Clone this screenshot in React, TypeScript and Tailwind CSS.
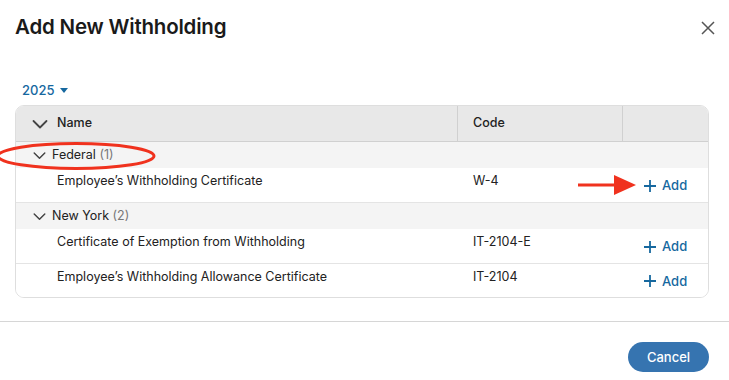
import React from 'react';

const font = { fontFamily: 'Inter, "Noto Sans", sans-serif' };

const Chevron = ({ size = 14, w = 1.6 }: { size?: number; w?: number }) => (
  <svg width={size} height={size} viewBox="0 0 16 16" fill="none" stroke="#444" strokeWidth={w} strokeLinecap="round" strokeLinejoin="round">
    <path d="M1.5 5 8 11.5 14.5 5" />
  </svg>
);

const AddButton = () => (
  <button className="flex items-center gap-[5px] text-[13px] font-medium text-[#16689f]">
    <svg width="14" height="14" viewBox="0 0 14 14" stroke="#16689f" strokeWidth="1.8">
      <path d="M7 1v12M1 7h12" />
    </svg>
    Add
  </button>
);

type Item = { name: string; code: string };

const groups: { title: string; items: Item[] }[] = [
  { title: 'Federal', items: [{ name: 'Employee’s Withholding Certificate', code: 'W-4' }] },
  {
    title: 'New York',
    items: [
      { name: 'Certificate of Exemption from Withholding', code: 'IT-2104-E' },
      { name: 'Employee’s Withholding Allowance Certificate', code: 'IT-2104' },
    ],
  },
];

const App: React.FC = () => {
  return (
    <div className="relative w-[729px] h-[380px] bg-white overflow-hidden text-[#222]" style={font}>
      {/* Header */}
      <div className="flex items-center justify-between pl-[15px] pr-[13px] pt-[12px]">
        <h2 className="text-[20.5px] font-semibold text-[#1a1a1a] tracking-[-0.2px]">Add New Withholding</h2>
        <svg width="16" height="16" viewBox="0 0 16 16" stroke="#555" strokeWidth="1.5" className="mt-[1px]">
          <path d="M2 2l12 12M14 2 2 14" />
        </svg>
      </div>

      {/* Year picker */}
      <div className="pl-[22px] mt-[38px] flex items-center gap-[6px] text-[13px] font-medium text-[#16689f]">
        2025
        <svg width="8" height="5" viewBox="0 0 8 5" fill="#16689f">
          <path d="M0 0h8L4 5z" />
        </svg>
      </div>

      {/* Table */}
      <div className="ml-[15px] mr-[20px] mt-[5px] rounded-[9px] border border-[#dedede] overflow-hidden text-[12.5px]">
        <div className="flex h-[36px] bg-[#e8e8e8] border-b border-[#d0d0d0] font-medium text-[#222]">
          <div className="w-[442px] flex items-center gap-[9px] pl-[16px] border-r border-[#d0d0d0]">
            <Chevron size={16} w={1.8} />
            Name
          </div>
          <div className="w-[165px] flex items-center pl-[15px] border-r border-[#d0d0d0]">Code</div>
          <div className="flex-1" />
        </div>

        {groups.map((g, gi) => (
          <div key={g.title}>
            <div className={`flex items-center gap-[6px] pl-[17px] bg-[#f4f4f4] ${gi === 0 ? 'h-[26px]' : 'h-[27px] border-t border-[#e4e4e4]'}`}>
              <Chevron size={13} w={1.8} />
              <span>
                {g.title} <span className="text-[#777]">({g.items.length})</span>
              </span>
            </div>
            {g.items.map((it, ii) => (
              <div key={it.name} className={`flex h-[34px] bg-white ${ii > 0 ? 'border-t border-[#e4e4e4]' : ''}`}>
                <div className="w-[442px] pl-[41px] pt-[4px]">{it.name}</div>
                <div className="w-[165px] pl-[15px] pt-[4px]">{it.code}</div>
                <div className="flex-1 flex items-center pl-[20px] pt-[1px]">
                  <AddButton />
                </div>
              </div>
            ))}
          </div>
        ))}
      </div>

      {/* Footer */}
      <div className="mt-[23px] border-t border-[#d6d6d6] flex justify-end pr-[20px] pt-[20px]">
        <button className="w-[81px] h-[30px] rounded-full bg-[#3674b0] text-white text-[13px] font-medium">Cancel</button>
      </div>

      {/* Annotations */}
      <svg className="absolute left-0 top-[139px] pointer-events-none" width="170" height="34" viewBox="0 0 170 34">
        <ellipse cx="76" cy="17" rx="78" ry="12.5" fill="none" stroke="#f0321e" strokeWidth="3" />
      </svg>
      <svg className="absolute left-[575px] top-[172px] pointer-events-none" width="64" height="26" viewBox="0 0 64 26">
        <path d="M3 13h40" stroke="#f0321e" strokeWidth="3" />
        <path d="M39 3 61 13 39 23z" fill="#f0321e" />
      </svg>
    </div>
  );
};

export default App;
